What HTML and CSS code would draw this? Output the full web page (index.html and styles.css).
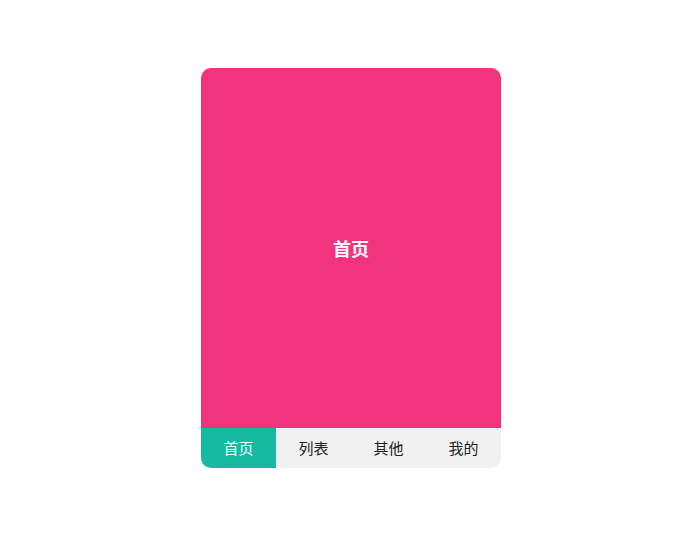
FILE: index.html
```html
<!DOCTYPE html>
<html lang="zh">
<head>
<meta charset="utf-8">
<title>Tabs</title>
<link rel="stylesheet" href="styles.css">
</head>
<body>
<div class="page">
  <div class="card">
    <div class="content">首页</div>
    <div class="tabbar">
      <div class="tab active">首页</div>
      <div class="tab">列表</div>
      <div class="tab">其他</div>
      <div class="tab">我的</div>
    </div>
  </div>
</div>
</body>
</html>
```
FILE: styles.css
```css
html, body {
  margin: 0;
  padding: 0;
  background: #ffffff;
}
body {
  font-family: "Noto Sans CJK SC", "Noto Sans", sans-serif;
}
.page {
  padding: 68px 0 0 201px;
}
.card {
  width: 300px;
  height: 400px;
  border-radius: 10px;
  overflow: hidden;
  display: flex;
  flex-direction: column;
}
.content {
  height: 360px;
  background: #f2347f;
  color: #ffffff;
  font-size: 18px;
  font-weight: 700;
  display: flex;
  align-items: center;
  justify-content: center;
}
.tabbar {
  height: 40px;
  display: flex;
  background: #f1f1f1;
}
.tab {
  flex: 1;
  display: flex;
  align-items: center;
  justify-content: center;
  font-size: 15px;
  color: #222222;
  padding-bottom: 2px;
  box-sizing: border-box;
}
.tab.active {
  background: #17b9a0;
  color: #ffffff;
}
```
